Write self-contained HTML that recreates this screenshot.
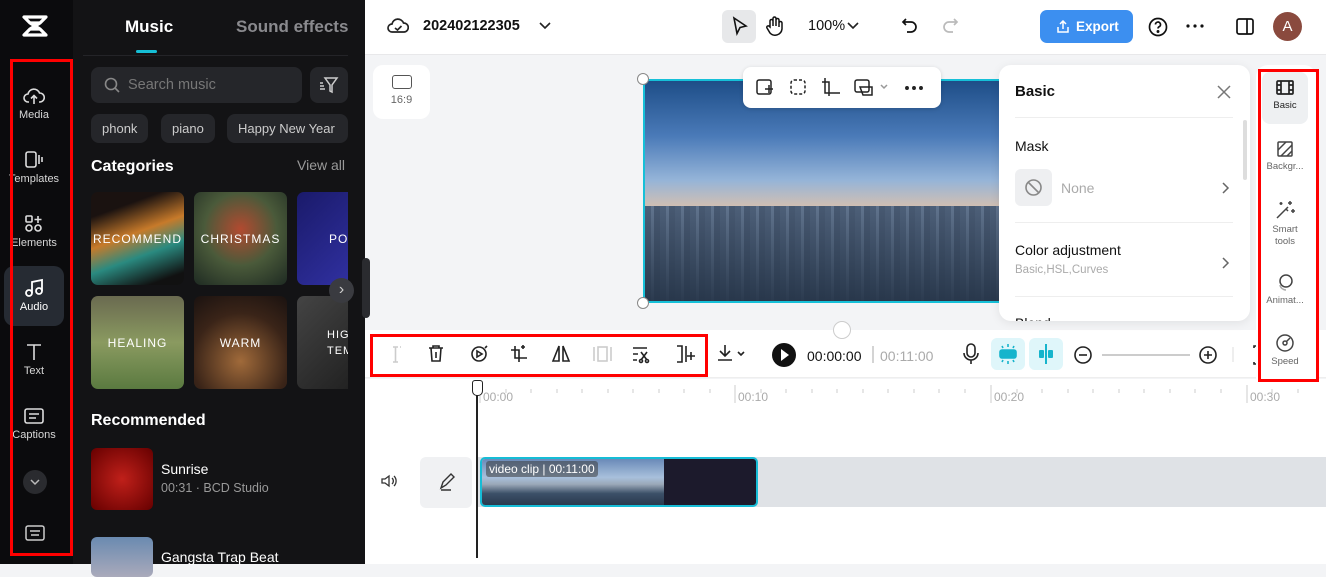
<!DOCTYPE html>
<html><head><meta charset="utf-8"><style>
*{box-sizing:border-box;margin:0;padding:0}
body{width:1326px;height:564px;overflow:hidden;font-family:"Liberation Sans",sans-serif;background:#f3f4f6;position:relative}
.abs{position:absolute}
.side{left:0;top:0;width:73px;height:564px;background:#0b0b0d}
.panel{left:73px;top:0;width:292px;height:564px;background:#131315;color:#fff}
.navi{position:absolute;left:4px;width:60px;text-align:center;color:#d8d8d8;font-size:11px}
.navi svg{display:block;margin:0 auto 3px}
.chip{position:absolute;top:114px;height:29px;background:#25262a;border-radius:8px;color:#ccc;font-size:13px;line-height:29px;padding:0 11px}
.cat{position:absolute;width:93px;height:93px;border-radius:7px;color:#fff;font-size:12px;letter-spacing:1px;display:flex;align-items:center;justify-content:center;overflow:hidden}
.red{position:absolute;border:3px solid #f00;z-index:9}
.tb svg{position:absolute}
.rt{position:absolute;left:1262px;width:46px;text-align:center;font-size:9.5px;color:#666;z-index:6}
.z{z-index:5}
</style></head><body>
<!-- sidebar -->
<div class="abs side">
 <svg class="abs" style="left:20px;top:14px" width="30" height="24" viewBox="0 0 30 24"><path d="M4 3h22l-6 6H10zM4 21h22l-6-6H10z M10 9l10 6M20 9l-10 6" fill="none" stroke="#fff" stroke-width="3.2" stroke-linejoin="round"/></svg>
 <div class="navi" style="top:86px"><svg width="22" height="20" viewBox="0 0 22 20" fill="none" stroke="#ddd" stroke-width="1.6"><path d="M6 16H5a4 4 0 0 1 0-8 6 6 0 0 1 11.5-1A4.5 4.5 0 0 1 17 16h-1M11 18V10M8 12.5l3-3 3 3"/></svg>Media</div>
 <div class="navi" style="top:150px"><svg width="22" height="20" viewBox="0 0 22 20" fill="none" stroke="#ddd" stroke-width="1.6"><rect x="3" y="2" width="10" height="15" rx="2"/><path d="M16 5v9M19 7v5"/></svg>Templates</div>
 <div class="navi" style="top:214px"><svg width="22" height="20" viewBox="0 0 22 20" fill="none" stroke="#ddd" stroke-width="1.6"><rect x="3" y="2" width="6" height="6" rx="1"/><path d="M15 2v7M11.5 5.5h7"/><circle cx="6" cy="14" r="3"/><circle cx="15" cy="14" r="3"/></svg>Elements</div>
 <div class="abs" style="left:4px;top:266px;width:60px;height:60px;background:#262b33;border-radius:10px"></div>
 <div class="navi" style="top:278px;color:#fff"><svg width="22" height="20" viewBox="0 0 22 20" fill="none" stroke="#fff" stroke-width="1.8"><circle cx="6" cy="15" r="3"/><circle cx="16" cy="13" r="3"/><path d="M9 15V4l10-2v11"/></svg>Audio</div>
 <div class="navi" style="top:342px"><svg width="22" height="20" viewBox="0 0 22 20" fill="none" stroke="#ddd" stroke-width="1.6"><path d="M4 3h14M11 3v15"/></svg>Text</div>
 <div class="navi" style="top:406px"><svg width="22" height="20" viewBox="0 0 22 20" fill="none" stroke="#ddd" stroke-width="1.6"><rect x="2" y="3" width="18" height="14" rx="2"/><path d="M6 8h10M6 12h7"/></svg>Captions</div>
 <div class="abs" style="left:23px;top:470px;width:24px;height:24px;border-radius:50%;background:#2a2b2f"><svg width="24" height="24"><path d="M8 10l4 4 4-4" stroke="#bbb" fill="none" stroke-width="1.5"/></svg></div>
 <svg class="abs" style="left:24px;top:524px" width="22" height="18" fill="none" stroke="#ccc" stroke-width="1.5"><rect x="2" y="2" width="18" height="14" rx="2"/><path d="M6 7h10M7 11h8"/></svg>
</div>
<div class="red" style="left:10px;top:59px;width:63px;height:497px"></div>
<!-- panel -->
<div class="abs panel">
 <div class="abs" style="left:52px;top:17px;font-size:17px;font-weight:bold">Music</div>
 <div class="abs" style="left:163px;top:17px;font-size:17px;font-weight:bold;color:#8a8a8e">Sound effects</div>
 <div class="abs" style="left:63px;top:50px;width:21px;height:3px;background:#16bfd6;border-radius:2px"></div>
 <div class="abs" style="left:10px;top:55px;width:265px;height:1px;background:#242428"></div>
 <div class="abs" style="left:18px;top:67px;width:211px;height:36px;background:#25262a;border-radius:8px;color:#777;font-size:14.5px;line-height:36px;padding-left:37px">Search music
  <svg class="abs" style="left:13px;top:10px" width="16" height="16" fill="none" stroke="#888" stroke-width="1.6"><circle cx="7" cy="7" r="5.5"/><path d="M11 11l4 4"/></svg></div>
 <div class="abs" style="left:237px;top:67px;width:38px;height:36px;background:#25262a;border-radius:8px"><svg width="38" height="36" fill="none" stroke="#ccc" stroke-width="1.5"><path d="M15 11h12l-5 7v7l-2-1v-6zM10 16h3M10 19h4M10 22h5"/></svg></div>
 <div class="chip" style="left:18px">phonk</div>
 <div class="chip" style="left:88px">piano</div>
 <div class="chip" style="left:154px;width:121px;white-space:nowrap;overflow:hidden">Happy New Year</div>
 <div class="abs" style="left:18px;top:158px;font-size:16px;font-weight:bold">Categories</div>
 <div class="abs" style="left:224px;top:157px;font-size:14px;color:#999">View all</div>
 <div class="cat" style="left:18px;top:192px;background:linear-gradient(160deg,#1a1210 20%,#c77a2a 45%,#2a8a80 65%,#111 90%)">RECOMMEND</div>
 <div class="cat" style="left:121px;top:192px;background:radial-gradient(circle at 50% 40%,#b24a30,#4a5a3a 50%,#1e2a22)">CHRISTMAS</div>
 <div class="cat" style="left:224px;top:192px;width:51px;border-radius:7px 0 0 7px;background:linear-gradient(135deg,#1a1a6a,#3030a0);justify-content:flex-start;padding-left:32px">PO</div>
 <div class="cat" style="left:18px;top:296px;background:linear-gradient(180deg,#6a6a50,#8a9a60 50%,#5a7a40)">HEALING</div>
 <div class="cat" style="left:121px;top:296px;background:radial-gradient(circle at 50% 70%,#a06a3a,#3a2418 60%,#1a1210)">WARM</div>
 <div class="cat" style="left:224px;top:296px;width:51px;border-radius:7px 0 0 7px;background:linear-gradient(135deg,#444,#222);justify-content:flex-start;padding-left:30px;font-size:11px;line-height:16px;white-space:nowrap">HIG<br>TEM</div>
 <div class="abs" style="left:256px;top:278px;width:25px;height:25px;border-radius:50%;background:#3a3b40;color:#ccc;text-align:center;line-height:24px;font-size:16px">›</div>
 <div class="abs" style="left:18px;top:412px;font-size:16px;font-weight:bold">Recommended</div>
 <div class="abs" style="left:18px;top:448px;width:62px;height:62px;border-radius:6px;background:radial-gradient(circle,#c0201a,#600);"></div>
 <div class="abs" style="left:88px;top:461px;font-size:14px">Sunrise</div>
 <div class="abs" style="left:88px;top:481px;font-size:12.5px;color:#999">00:31 · BCD Studio</div>
 <div class="abs" style="left:18px;top:537px;width:62px;height:40px;border-radius:6px;background:linear-gradient(#6a8ab0,#aab)"></div>
 <div class="abs" style="left:88px;top:549px;font-size:14px">Gangsta Trap Beat</div>
 <div class="abs" style="left:289px;top:258px;width:8px;height:60px;background:#2a2b2f;border-radius:4px"></div>
</div>
<!-- top bar -->
<div class="abs" style="left:365px;top:0;width:961px;height:55px;background:#fff;border-bottom:1px solid #e8e8ea"></div>
<svg class="abs" style="left:387px;top:16px" width="22" height="20" fill="none" stroke="#222" stroke-width="1.7"><path d="M6 16H5a4 4 0 0 1 0-8 6 6 0 0 1 11.5-1A4.5 4.5 0 0 1 17 16H6"/><path d="M8 12l2.5 2 4-4"/></svg>
<div class="abs" style="left:423px;top:18px;font-size:14.5px;font-weight:bold;color:#111">202402122305</div>
<svg class="abs" style="left:538px;top:20px" width="14" height="12"><path d="M2 3l5 5 5-5" stroke="#222" fill="none" stroke-width="1.6"/></svg>
<div class="abs" style="left:722px;top:10px;width:34px;height:33px;background:#e7e8ea;border-radius:6px"></div>
<svg class="abs" style="left:730px;top:16px" width="20" height="22" fill="none" stroke="#111" stroke-width="1.6"><path d="M4 2l12 8-6 1.5-3 6z"/></svg>
<svg class="abs" style="left:764px;top:15px" width="22" height="22" fill="none" stroke="#111" stroke-width="1.5"><path d="M6 12V6a1.5 1.5 0 0 1 3 0v5V3.5a1.5 1.5 0 0 1 3 0V11V5a1.5 1.5 0 0 1 3 0v7 0-4a1.5 1.5 0 0 1 3 0v6a7 7 0 0 1-12 4l-3-5a1.4 1.4 0 0 1 2.4-1.5z"/></svg>
<div class="abs" style="left:808px;top:18px;font-size:14.5px;color:#111">100%</div>
<svg class="abs" style="left:846px;top:20px" width="14" height="12"><path d="M2 3l5 5 5-5" stroke="#222" fill="none" stroke-width="1.6"/></svg>
<svg class="abs" style="left:900px;top:16px" width="20" height="20" fill="none" stroke="#111" stroke-width="1.7"><path d="M6 3L3 6l3 3M3 6h8a5 5 0 0 1 0 10H7"/></svg>
<svg class="abs" style="left:940px;top:16px" width="20" height="20" fill="none" stroke="#bbb" stroke-width="1.7"><path d="M14 3l3 3-3 3M17 6H9a5 5 0 0 0 0 10h4"/></svg>
<div class="abs" style="left:1040px;top:10px;width:93px;height:33px;background:#3c8ff0;border-radius:7px;color:#fff;font-size:13.5px;font-weight:bold;line-height:33px;padding-left:36px">Export
 <svg class="abs" style="left:16px;top:10px" width="14" height="14" fill="none" stroke="#fff" stroke-width="1.5"><path d="M7 9V1M4 4l3-3 3 3M2 7v5h10V7"/></svg></div>
<svg class="abs" style="left:1147px;top:16px" width="22" height="22" fill="none" stroke="#111" stroke-width="1.7"><circle cx="11" cy="11" r="8.5"/><path d="M8.5 8.5a2.5 2.5 0 1 1 3.5 2.3c-.7.4-1 .9-1 1.7"/><circle cx="11" cy="15.5" r=".6" fill="#111"/></svg>
<svg class="abs" style="left:1184px;top:20px" width="22" height="12" fill="#111"><circle cx="4" cy="6" r="1.6"/><circle cx="11" cy="6" r="1.6"/><circle cx="18" cy="6" r="1.6"/></svg>
<svg class="abs" style="left:1235px;top:17px" width="20" height="20" fill="none" stroke="#111" stroke-width="1.7"><rect x="2" y="2" width="16" height="15" rx="2"/><path d="M12 2v15"/></svg>
<div class="abs" style="left:1273px;top:12px;width:29px;height:29px;border-radius:50%;background:#8a4a3e;color:#fff;text-align:center;line-height:29px;font-size:15px">A</div>
<!-- canvas -->
<div class="abs" style="left:373px;top:65px;width:57px;height:54px;background:#fff;border-radius:10px;text-align:center;font-size:11px;color:#666;padding-top:10px"><div style="width:20px;height:14px;border:1.5px solid #555;border-radius:3px;margin:0 auto 5px"></div>16:9</div>
<div class="abs" style="left:643px;top:79px;width:360px;height:224px;border:2px solid #16c0d8;background:linear-gradient(180deg,#1e4e88 0%,#4a7ab8 25%,#95b4d8 45%,#d6c0b0 58%,#6e8aa8 68%,#3a4a60 85%,#2a3444 100%);overflow:hidden">
 <div style="position:absolute;left:0;bottom:0;width:100%;height:95px;background:linear-gradient(180deg,rgba(90,110,140,.6),rgba(40,55,75,.95)),repeating-linear-gradient(90deg,#3a4a5c 0 6px,#6a7c90 6px 9px,#2c3a4a 9px 15px)"></div>
</div>
<div class="abs" style="left:637px;top:73px;width:12px;height:12px;border-radius:50%;background:#fff;border:1px solid #888"></div>
<div class="abs" style="left:637px;top:297px;width:12px;height:12px;border-radius:50%;background:#fff;border:1px solid #888"></div>
<div class="abs" style="left:743px;top:67px;width:198px;height:41px;background:#fff;border-radius:8px;box-shadow:0 1px 4px rgba(0,0,0,.15)"></div>
<svg class="abs tb" style="left:743px;top:67px" width="198" height="41" fill="none" stroke="#222" stroke-width="1.5">
 <rect x="14" y="13" width="14" height="14" rx="2"/><path d="M22 22h8M26 18v8"/>
 <rect x="48" y="13" width="14" height="14" rx="3" stroke-dasharray="3 2"/>
 <path d="M82 11v15h15M86 29V15H79"/>
 <rect x="112" y="13" width="14" height="12" rx="2"/><path d="M117 20h12v8h-9z"/><path d="M138 18l3 3 3-3" stroke="#999"/>
 <circle cx="164" cy="21" r="1.2" fill="#222"/><circle cx="171" cy="21" r="1.2" fill="#222"/><circle cx="178" cy="21" r="1.2" fill="#222"/>
</svg>
<!-- toolbar -->
<div class="abs" style="left:365px;top:330px;width:961px;height:48px;background:#fff;border-bottom:1px solid #eee"></div>
<div class="abs" style="left:833px;top:321px;width:18px;height:18px;border-radius:50%;background:#fff;border:1px solid #ccc"></div>
<svg class="abs tb" style="left:365px;top:330px" width="961" height="48" fill="none" stroke="#222" stroke-width="1.6">
 <path d="M28 17h5M28 32h5M30.5 17v15M36 17h-1" stroke="#ccc"/>
 <path d="M64 18h14M68 18v-2h6v2M66 18l1 13h8l1-13M71 22v6"/>
 <circle cx="114" cy="24" r="7"/><path d="M112 21v6l5-3z"/><path d="M120 18l2-2" />
 <path d="M150 16v12h12M154 32V20h-8M158 15v4M156 17h4"/>
 <path d="M194 16l-6 15h6zM198 16l6 15h-6z"/>
 <rect x="233" y="17" width="9" height="14" stroke="#ccc"/><path d="M229 17v14M246 17v14" stroke="#ccc"/>
 <path d="M268 18h14M268 24h5M268 30h4M276 30l6-8M282 30l-6-8"/><circle cx="276" cy="31" r="1.5"/><circle cx="282" cy="31" r="1.5"/>
 <path d="M312 16h5v16h-5M321 16v16M326 22v8M322 26h8"/>
 <path d="M360 15v11M355 21l5 5 5-5M353 30h14M373 22l3 3 3-3" />
 <circle cx="419" cy="25" r="12" fill="#111" stroke="none"/><path d="M416 19v12l8-6z" fill="#fff" stroke="none"/>
 <path d="M508 16v17" stroke="#aaa" stroke-width="1"/>
 <rect x="602" y="14" width="8" height="13" rx="4"/><path d="M599 23a7 7 0 0 0 14 0M606 30v4"/>
 <circle cx="718" cy="25" r="8"/><path d="M714 25h8"/>
 <path d="M737 25h88" stroke="#ccc" stroke-width="2"/>
 <circle cx="843" cy="25" r="8"/><path d="M839 25h8M843 21v8"/>
 <path d="M868 17v15" stroke="#ddd" stroke-width="1"/>
 <path d="M889 18v-2h4M889 32v2h4"/>
</svg>
<div class="abs" style="left:807px;top:348px;font-size:14px;color:#111">00:00:00</div>
<div class="abs" style="left:880px;top:348px;font-size:14px;color:#aaa">00:11:00</div>
<div class="abs" style="left:991px;top:338px;width:34px;height:32px;background:#dff6fa;border-radius:6px"><svg width="34" height="32" fill="none" stroke="#16b4cc" stroke-width="1.6"><rect x="9" y="12" width="16" height="8" rx="2" fill="#16b4cc"/><path d="M17 6v3M17 23v3M11 8l1 2M23 8l-1 2M11 24l1-2M23 24l-1-2"/></svg></div>
<div class="abs" style="left:1029px;top:338px;width:34px;height:32px;background:#dff6fa;border-radius:6px"><svg width="34" height="32" fill="#16b4cc"><rect x="10" y="12" width="5" height="8" rx="1"/><rect x="19" y="12" width="5" height="8" rx="1"/><rect x="16" y="6" width="2" height="20"/></svg></div>
<div class="red" style="left:370px;top:334px;width:338px;height:43px"></div>
<!-- basic panel -->
<div class="abs z" style="left:999px;top:65px;width:251px;height:256px;background:#fff;border-radius:12px;box-shadow:0 2px 10px rgba(0,0,0,.08);overflow:hidden">
 <div class="abs" style="left:16px;top:18px;font-size:15px;font-weight:bold;color:#111">Basic</div>
 <svg class="abs" style="left:217px;top:19px" width="16" height="16" stroke="#777" stroke-width="1.5"><path d="M2 2l12 12M14 2L2 14"/></svg>
 <div class="abs" style="left:16px;top:52px;width:218px;height:1px;background:#eee"></div>
 <div class="abs" style="left:16px;top:73px;font-size:14px;color:#111">Mask</div>
 <div class="abs" style="left:16px;top:104px;width:37px;height:37px;border-radius:6px;background:#eeeff1"><svg width="37" height="37" fill="none" stroke="#888" stroke-width="1.6"><circle cx="18.5" cy="18.5" r="7.5"/><path d="M13 13l11 11"/></svg></div>
 <div class="abs" style="left:62px;top:115px;font-size:14px;color:#aaa">None</div>
 <svg class="abs" style="left:221px;top:116px" width="10" height="14"><path d="M3 2l5 5-5 5" fill="none" stroke="#666" stroke-width="1.5"/></svg>
 <div class="abs" style="left:16px;top:157px;width:218px;height:1px;background:#eee"></div>
 <div class="abs" style="left:16px;top:177px;font-size:14px;color:#111">Color adjustment</div>
 <div class="abs" style="left:16px;top:199px;font-size:11.5px;color:#aaa">Basic,HSL,Curves</div>
 <svg class="abs" style="left:221px;top:191px" width="10" height="14"><path d="M3 2l5 5-5 5" fill="none" stroke="#666" stroke-width="1.5"/></svg>
 <div class="abs" style="left:16px;top:231px;width:218px;height:1px;background:#eee"></div>
 <div class="abs" style="left:16px;top:250px;font-size:14px;color:#111">Blend</div>
 <div class="abs" style="left:244px;top:55px;width:4px;height:60px;border-radius:2px;background:#ddd"></div>
</div>
<!-- right rail -->
<div class="abs z" style="left:1256px;top:65px;width:60px;height:315px;background:#fff;border-radius:12px 12px 0 0"></div>
<div class="abs z" style="left:1262px;top:72px;width:46px;height:52px;background:#eef0f2;border-radius:8px"></div>
<div class="rt" style="top:79px;color:#222"><svg width="20" height="18" fill="none" stroke="#222" stroke-width="1.7"><rect x="2" y="2" width="16" height="13" rx="1"/><path d="M6 2v13M14 2v13M2 6h4M2 11h4M14 6h4M14 11h4"/></svg><br>Basic</div>
<div class="rt" style="top:140px"><svg width="20" height="18" fill="none" stroke="#444" stroke-width="1.5"><rect x="3" y="2" width="14" height="14" rx="1"/><path d="M3 10l8-8M6 16l11-11M12 16l5-5"/></svg><br>Backgr...</div>
<div class="rt" style="top:200px;line-height:12px"><svg width="22" height="20" fill="none" stroke="#444" stroke-width="1.5"><path d="M3 18L14 7M12 9l2 2M16 1v4M14 3h4M19 9v4M17 11h4M7 2v3M5.5 3.5h3"/></svg><br>Smart<br>tools</div>
<div class="rt" style="top:272px"><svg width="22" height="20" fill="none" stroke="#444" stroke-width="1.5"><circle cx="12" cy="9" r="6"/><path d="M6 13a6 6 0 0 0 6 5" stroke="#aaa"/></svg><br>Animat...</div>
<div class="rt" style="top:333px"><svg width="22" height="20" fill="none" stroke="#444" stroke-width="1.5"><circle cx="11" cy="10" r="8"/><circle cx="11" cy="10" r="2"/><path d="M12.5 8.5L16 5"/></svg><br>Speed</div>
<div class="red" style="left:1258px;top:69px;width:61px;height:313px"></div>
<!-- timeline -->
<div class="abs" style="left:365px;top:379px;width:961px;height:185px;background:#fff"></div>
<svg class="abs" style="left:365px;top:379px" width="961" height="40">
 <g stroke="#ccc" stroke-width="1">
  <path d="M115 6v18M370 6v18M626 6v18M882 6v18"/>
  <path d="M141 10v4M166 10v4M192 10v4M217 10v4M243 10v4M268 10v4M294 10v4M319 10v4M345 10v4M396 10v4M421 10v4M447 10v4M472 10v4M498 10v4M523 10v4M549 10v4M574 10v4M600 10v4M652 10v4M677 10v4M703 10v4M728 10v4M754 10v4M779 10v4M805 10v4M830 10v4M856 10v4M907 10v4M933 10v4"/>
 </g>
 <g font-size="12" fill="#aaa" font-family="Liberation Sans"><text x="118" y="22">00:00</text><text x="373" y="22">00:10</text><text x="629" y="22">00:20</text><text x="885" y="22">00:30</text></g>
</svg>
<div class="abs" style="left:476px;top:388px;width:2px;height:170px;background:#222"></div>
<div class="abs" style="left:472px;top:380px;width:11px;height:16px;background:#fff;border:1.5px solid #222;border-radius:3px 3px 5px 5px"></div>
<svg class="abs" style="left:380px;top:473px" width="18" height="16" fill="none" stroke="#333" stroke-width="1.3"><path d="M2 6h3l4-3v10l-4-3H2zM12 5a4 4 0 0 1 0 6M14 3a7 7 0 0 1 0 10"/></svg>
<div class="abs" style="left:420px;top:457px;width:52px;height:51px;background:#f0f1f3;border-radius:6px"><svg width="52" height="51" fill="none" stroke="#333" stroke-width="1.4"><path d="M21 31l2-6 8-8 3 3-8 8zM21 33h10"/></svg></div>
<div class="abs" style="left:478px;top:457px;width:848px;height:50px;background:#dfe2e6"></div>
<div class="abs" style="left:480px;top:457px;width:278px;height:50px;border:2px solid #16bcd6;border-radius:5px;overflow:hidden;background:linear-gradient(90deg,transparent 0,transparent 182px,#1c1a2c 182px)">
 <div style="position:absolute;left:0;top:0;width:182px;height:46px;background:linear-gradient(180deg,#6a8ab8 0%,#a8c0dc 40%,#9aa8b8 55%,#3c5068 75%,#2a3a4e 100%)"></div>
 <div style="position:absolute;left:4px;top:2px;background:rgba(60,60,60,.55);color:#fff;font-size:12px;padding:1px 3px;border-radius:3px">video clip | 00:11:00</div>
</div>
</body></html>
